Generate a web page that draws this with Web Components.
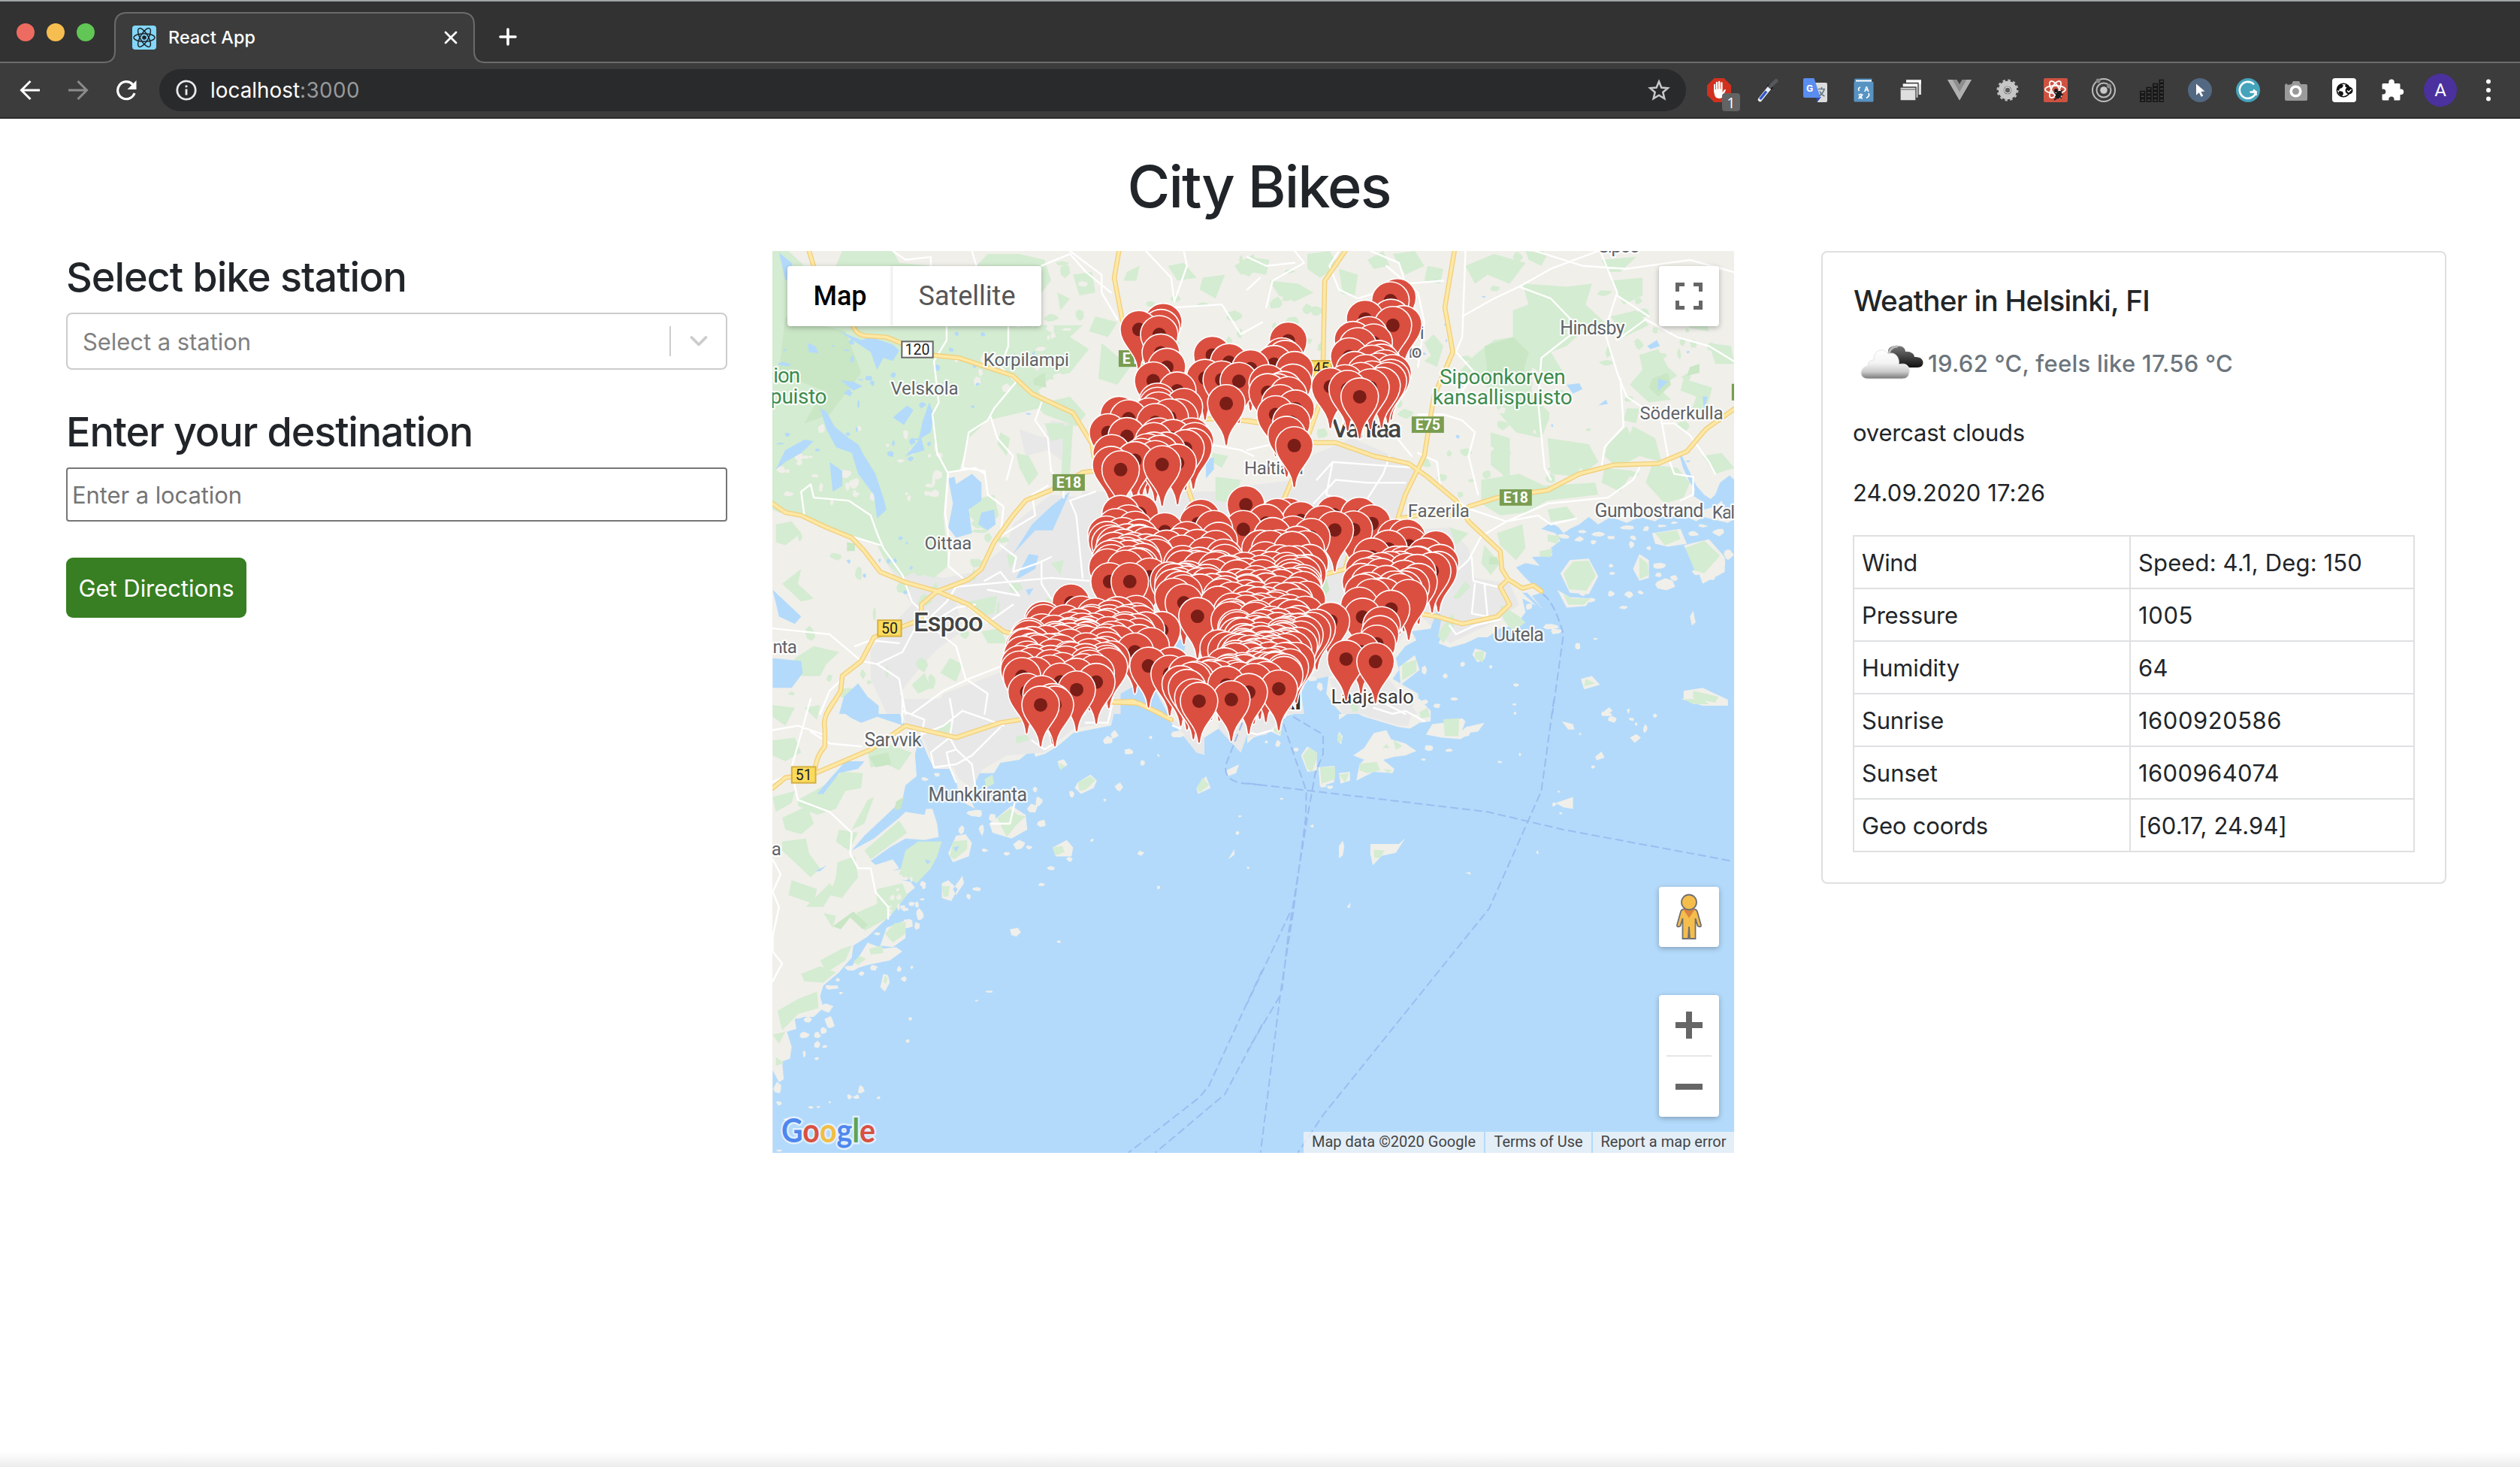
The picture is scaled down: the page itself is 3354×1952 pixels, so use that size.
<!DOCTYPE html>
<html lang="en">
<head>
<meta charset="utf-8">
<title>React App</title>
<style>
html,body{margin:0;padding:0;background:#fff}
body{width:3354px;height:1952px;overflow:hidden;font-family:Inter,"Liberation Sans",sans-serif;color:#212529}
</style>
</head>
<body>
<city-app></city-app>
<script>
const define = (name, html, init) => {
  const t = document.createElement('template');
  t.innerHTML = html;
  customElements.define(name, class extends HTMLElement {
    constructor() {
      super();
      this.attachShadow({mode: 'open'}).appendChild(t.content.cloneNode(true));
      if (init) init.call(this, this.shadowRoot);
    }
  });
};

/* ---------- browser frame ---------- */
define('tab-strip', `
<style>
:host{display:grid;height:84px;background:#323232;color:#fff}
svg.frame{grid-area:1/1;width:3354px;height:84px}
.row{grid-area:1/1;z-index:1;display:flex;align-items:center;height:84px}
.lights{display:flex;gap:16px;padding:2px 0 0 22px;width:132px}
.lights i{width:24px;height:24px;border-radius:50%;box-sizing:border-box}
.tab{display:flex;align-items:center;width:478px;box-sizing:border-box;padding:15px 23px 0 22px}
.tab svg{flex:none}
.t{font-size:23.3px;line-height:32px;font-weight:500;margin-left:16px;flex:1;white-space:nowrap}
.plus{margin-left:32px;padding-top:14px}
</style>
<svg class="frame" viewBox="0 0 3354 84"><path d="M0 1H3354" stroke="#a3a5a6" stroke-width="2"/>
<path d="M0 84V83H138Q153 83 153 68V33Q153 17 169 17H615Q631 17 631 33V68Q631 83 646 83H3354V85H0Z" fill="#3c3c3c" stroke="#6b6b6b" stroke-width="2"/></svg>
<div class="row">
 <div class="lights"><i style="background:#ed6b60"></i><i style="background:#f6be50"></i><i style="background:#61c655"></i></div>
 <div class="tab">
  <svg width="32" height="32" viewBox="0 0 32 32"><rect width="32" height="32" rx="4" fill="#82d7f9"/><g fill="none" stroke="#20252b" stroke-width="1.5"><ellipse cx="16" cy="16" rx="14" ry="5.3"/><ellipse cx="16" cy="16" rx="14" ry="5.3" transform="rotate(60 16 16)"/><ellipse cx="16" cy="16" rx="14" ry="5.3" transform="rotate(120 16 16)"/></g><circle cx="16" cy="16" r="2.8" fill="#20252b"/></svg>
  <div class="t"><fit-text w="116">React App</fit-text></div>
  <svg width="18" height="18" viewBox="0 0 18 18" stroke="#fff" stroke-width="2.8" stroke-linecap="round"><path d="M2 2L16 16M16 2L2 16"/></svg>
 </div>
 <svg class="plus" width="24" height="26" viewBox="0 0 24 26" stroke="#fff" stroke-width="3.6" stroke-linecap="round"><path d="M12 3V23M2 13H22"/></svg>
</div>`);

const EXT = [
 /* blocker */ '<path d="M9.5 0h13L32 9.5v13L22.500 32h-13L0 22.500v-13z" fill="#d1301f"/><path d="M9 17.500V9q0-1.300 1-1.300T11 9v6h.8V6q0-1.300 1.200-1.300T14.200 6v8.500h.8V5q0-1.300 1.200-1.300T17.400 5v9.500h.8V6.500q0-1.300 1.200-1.300t1.200 1.300V19l2-3.200q1.200-1.500 2.500-.4l-3.800 8.300q-1.500 3.300-4.800 3.300-5.500 0-6.500-5z" fill="#fff"/>',
 /* picker */ '<path d="M6.500 28.500L19 13" stroke="#e8edf5" stroke-width="5.500" stroke-linecap="round"/><path d="M6.500 28L15 17.500" stroke="#3058c8" stroke-width="3.500"/><path d="M17 9l6 5" stroke="#15181c" stroke-width="3.500"/><path d="M20 11L28 3.500" stroke="#55595e" stroke-width="5" stroke-linecap="round"/>',
 /* translate */ '<path d="M14 6h16q2 0 2 2v22q0 2-2 2H19z" fill="#dcdcdc"/><path d="M17 25h7l-5.500 7z" fill="#2d49b5"/><path d="M2 0h12.500L23 26H2Q0 26 0 24V2Q0 0 2 0z" fill="#5a8df0"/><path d="M20 14.500h9M24.500 12v2.500M28 14.500q-1 5-7 9.500M22 17.500q2 4.500 6.500 6.500" stroke="#667a86" stroke-width="1.700" fill="none"/><text x="4" y="18" font-size="13.500" font-weight="700" fill="#fff" font-family="Roboto">G</text>',
 /* dictionary */ '<path d="M5 1h22v5H5z" fill="#fff"/><path d="M5.500 1.500h22M5 1v5" stroke="#4a87b8" stroke-width="2"/><rect x="3.500" y="4.500" width="26" height="27" rx="1.500" fill="#5793c2"/><path d="M12 12q-4 2-1.500 5M9.500 22h6M12.500 20.500V22M14.500 22q-1 3.500-5 5M10.500 23.500q1.500 3 4.500 3.500M23 20q2 4-3 6.500" stroke="#fff" stroke-width="1.700" fill="none"/><text x="17" y="18" font-size="9.500" font-weight="700" fill="#fff" font-family="Roboto">A</text>',
 /* windows */ '<path d="M9 2h20v20H9z" fill="#ddd"/><path d="M9 5.500h20" stroke="#fff" stroke-width="4"/><path d="M4 6.500h21v20H4z" fill="#ddd" stroke="#3c3c3c" stroke-width="1.300"/><path d="M5 10h19" stroke="#fff" stroke-width="3.500"/><path d="M1 12h21v18H1z" fill="#dedede" stroke="#3c3c3c" stroke-width="1.300"/><path d="M2 15h19" stroke="#777" stroke-width="1.300"/>',
 /* vue */ '<path d="M0 2h12.500L16 8l3.500-6H32L16 29.500z" fill="#8e8e8e"/><path d="M0 2h6.500L16 18.500 25.500 2H32L16 29.500z" fill="#b0b0b0"/>',
 /* gear */ '<circle cx="16" cy="16" r="12.500" fill="none" stroke="#bcbcbc" stroke-width="4" stroke-dasharray="3.270 3.270"/><circle cx="16" cy="16" r="8.700" fill="none" stroke="#c6c6c6" stroke-width="7"/><circle cx="16" cy="16" r="4" fill="#5c5c5c" stroke="#e2e2e2" stroke-width="1.500"/>',
 /* react debug */ '<rect width="32" height="32" rx="2" fill="#cf5241"/><g fill="none" stroke="#fff" stroke-width="1.800"><ellipse cx="15.500" cy="15" rx="13.500" ry="5"/><ellipse cx="15.500" cy="15" rx="12.500" ry="5" transform="rotate(60 15.500 15)"/><ellipse cx="15.500" cy="15" rx="12.500" ry="5" transform="rotate(120 15.500 15)"/></g><ellipse cx="20" cy="22" rx="3.800" ry="5.500" transform="rotate(25 20 22)" fill="#1b1b1b"/><path d="M14 19l10 8M15 25l3-1M14 29l4-3M23 18l2-2M23 22l3 0" stroke="#1b1b1b" stroke-width="1.600"/><circle cx="16.500" cy="16.500" r="2.500" fill="#1b1b1b"/>',
 /* target */ '<g fill="none" stroke="#bdbdbd" stroke-width="2"><circle cx="16" cy="16" r="15"/><circle cx="16" cy="16" r="9.500"/></g><circle cx="16" cy="16" r="4.800" fill="#c9c9c9"/><circle cx="8.500" cy="3.500" r="3" fill="#888"/><circle cx="23" cy="10.500" r="3" fill="#888"/>',
 /* bars */ (() => { let s = ''; [3, 4, 5, 6].forEach((n, c) => { for (let i = 0; i < n; i++) s += `<rect x="${.8 + c * 8.500}" y="${27.600 - i * 5}" width="5.600" height="3.400" fill="#444" stroke="#141414" stroke-width="1.600"/>`; }); return s; })(),
 /* cursor */ '<circle cx="16" cy="16" r="16" fill="#536882"/><path d="M11 7.500L22.500 17.500l-5.200.5 3 5.500-2.600 1.300-2.800-5.600-3.900 3.400z" fill="#fff"/>',
 /* grammar */ '<circle cx="16" cy="16" r="16" fill="#45a3bb"/><path d="M24 8.500A11 11 0 1 0 26.500 18.500H18.500M26.500 18.500l-3.500-3M26.500 18.500V23" stroke="#fff" stroke-width="2.600" fill="none"/>',
 /* camera */ '<path d="M10 8l2-4h8l2 4h7q2 0 2 2v18q0 2-2 2H3q-2 0-2-2V9l2-2 2 2z" fill="#9a9a9a"/><circle cx="15.500" cy="17.500" r="6.300" fill="#999" stroke="#fff" stroke-width="3.600"/>',
 /* globe */ '<rect width="32" height="32" rx="4" fill="#fff"/><circle cx="15" cy="16" r="8.700" fill="#fff" stroke="#111" stroke-width="1.500"/><path d="M7 11q3-3 6-3l2 2-2 3-3 1-1 3-2-1zM10 17l4 1 1 3-2 3q-4-2-5-5zM18 8q4 1 5 4l-3 1-3-2z" fill="#111"/><circle cx="22.500" cy="16.500" r="5" fill="#111"/><path d="M20 16.500l2 2 3.500-3.500" stroke="#fff" stroke-width="1.500" fill="none"/>',
 /* puzzle */ '<path d="M3 7h8.300V5.200a3.700 3.700 0 0 1 7.400 0V7H25q1.500 0 1.500 1.500V14.500h1a3.700 3.700 0 0 1 0 7.400h-1V28q0 1.500-1.500 1.500H18.500v-1.300a3.600 3.600 0 0 0-7.200 0v1.300H4Q2.500 29.500 2.500 28V21.500h1.300a3.300 3.300 0 0 0 0-7H2.500V8.500Q2.500 7 4 7z" fill="#fff"/>'
];

define('tool-bar', `
<style>
:host{display:flex;align-items:center;height:74px;box-sizing:border-box;background:#3c3c3c;border-bottom:2px solid #2a2a2c;padding-left:8px;color:#fff}
.nav{width:64px;display:flex;justify-content:center}
.omni{display:flex;align-items:center;width:2032px;height:56px;margin-left:12px;border-radius:28px;background:#292a2c;box-sizing:border-box;padding:0 21px 0 22px;font-size:27.800px;line-height:40px}
.url{flex:1;margin-left:18px;white-space:nowrap}
.port{color:#97999b}
.ext{display:flex;margin-left:12px}
.cell{width:64px;height:56px;display:flex;align-items:center;justify-content:center;position:relative}
.badge{position:absolute;left:36px;top:32px;width:24px;height:24px;border-radius:4px;background:#636363;font:500 20px/25px "Open Sans",sans-serif;text-align:center}
.avatar{width:44px;height:44px;border-radius:50%;background:#4b319e;font:24px/45px Roboto,sans-serif;text-align:center}
</style>
<div class="nav"><svg width="28" height="28" viewBox="0 0 28 28" fill="none" stroke="#fff" stroke-width="3"><path d="M27 14H3M14.500 2L2.500 14l12 12"/></svg></div>
<div class="nav"><svg width="28" height="28" viewBox="0 0 28 28" fill="none" stroke="#8c8c8c" stroke-width="3"><path d="M1 14H25M13.500 2l12 12-12 12"/></svg></div>
<div class="nav"><svg width="28" height="28" viewBox="0 0 28 28"><path d="M25 18A11.500 11.500 0 1 1 22.500 6.300" fill="none" stroke="#fff" stroke-width="3.200"/><path d="M27.500 1V13H15.500z" fill="#fff"/></svg></div>
<div class="omni"><svg width="28" height="28" viewBox="0 0 28 28"><circle cx="14" cy="14" r="12.200" fill="none" stroke="#e8eaed" stroke-width="2.800"/><path d="M14 12.500V20.500M14 7.500V10.300" stroke="#e8eaed" stroke-width="2.800"/></svg>
<div class="url"><fit-text w="119">localhost</fit-text><span class="port"><fit-text w="80">:3000</fit-text></span></div>
<svg width="30" height="30" viewBox="0 0 30 30"><path d="M15 3.500l3.300 8 8.500.7-6.500 5.600 2 8.400-7.300-4.500-7.300 4.500 2-8.400-6.500-5.600 8.500-.7z" fill="none" stroke="#c7c9cb" stroke-width="2.500"/></svg></div>
<div class="ext"></div>`, root => {
  const e = root.querySelector('.ext');
  e.innerHTML = EXT.map((s, i) => `<div class="cell"><svg width="32" height="32" viewBox="0 0 32 32">${s}</svg>${i ? '' : '<div class="badge">1</div>'}</div>`).join('')
   + '<div class="cell"><div class="avatar">A</div></div><div class="cell"><svg width="6" height="30" viewBox="0 0 6 30" fill="#fff"><circle cx="3" cy="3.500" r="3"/><circle cx="3" cy="15" r="3"/><circle cx="3" cy="26.500" r="3"/></svg></div>';
});

/* ---------- form column ---------- */
define('station-form', `
<style>
:host{display:flex;flex-direction:column;width:880px;align-items:flex-start;white-space:nowrap}
h3{margin:0 0 14px;font-size:54px;line-height:70px;height:68px;font-weight:500}
.select,.input{display:flex;align-items:center;width:880px;box-sizing:border-box;font-size:31px}
.select{height:76px;border:2px solid #ccc;border-radius:8px;padding:0 24px 0 20px;color:#808080;margin-bottom:48px}
.select span{flex:1}
.sep{width:2px;height:40px;background:#ccc;margin-right:25px}
.input{height:72px;border:2px solid #767676;border-radius:4px;padding-left:6px;color:#757575;margin-bottom:48px}
.btn{display:flex;align-items:center;justify-content:center;width:240px;height:80px;border-radius:9px;background:#377f22;color:#fff;font-size:31px}
</style>
<h3><fit-text w="453">Select bike station</fit-text></h3>
<div class="select"><span><fit-text w="224">Select a station</fit-text></span><div class="sep"></div><svg width="24" height="16" viewBox="0 0 24 16" fill="none" stroke="#ccc" stroke-width="3.800" stroke-linecap="round" stroke-linejoin="round"><path d="M2.500 3l9.500 9.500L21.500 3"/></svg></div>
<h3><fit-text w="541">Enter your destination</fit-text></h3>
<div class="input"><fit-text w="226">Enter a location</fit-text></div>
<div class="btn"><fit-text w="207">Get Directions</fit-text></div>`);

/* ---------- weather card ---------- */
define('weather-row', `
<style>
:host{display:flex;height:68px;font-size:31px;line-height:69px}
:host(:not(:last-child)){border-bottom:2px solid #dee0e1}
div{padding-left:10px;white-space:nowrap}
.k{width:356px;border-right:2px solid #dee0e1}
</style><div class="k"><slot name="k"></slot></div><div><slot></slot></div>`);

define('weather-card', `
<style>
:host{display:block;box-sizing:border-box;width:832px;height:842px;border:2px solid #dfdfdf;border-radius:8px;padding:40px;white-space:nowrap}
h5{margin:0 0 9px 1px;font-size:38.700px;line-height:48px;font-weight:500}
.now{display:flex;align-items:center;height:100px;font-size:31px;font-weight:500;color:#6c757d;margin-bottom:19px}
p{margin:0 0 32px;font-size:31px;line-height:48px}
.table{border:2px solid #dee0e1}
</style>
<h5><fit-text w="394">Weather in Helsinki, FI</fit-text></h5>
<div class="now"><svg width="100" height="100" viewBox="0 0 100 100"><defs><linearGradient id="a" x1="0" y1="0" x2="0" y2="1"><stop offset="0" stop-color="#fff"/><stop offset=".45" stop-color="#f4f4f4"/><stop offset=".75" stop-color="#ccc"/><stop offset="1" stop-color="#777"/></linearGradient><linearGradient id="b" x1="0" y1="0" x2="0" y2="1"><stop offset="0" stop-color="#777"/><stop offset=".5" stop-color="#444"/><stop offset="1" stop-color="#111"/></linearGradient></defs>
<path d="M48 40C44 30 52 26 59 28C66 26 70 31 70 35C77 34 82 38 82 42C91 41 95 47 93 52Q92 56 85 56H60C56 48 50 44 48 40Z" fill="url(#b)"/><path d="M46 42Q50 27 60 28" stroke="#bbb" stroke-width="3" fill="none"/>
<path d="M20 71C8 71 8 56 20 54C20 48 24 46 28 46C27 32 42 29 47 38C55 34 63 42 61 52C70 49 77 54 75 63Q74 71 66 71Z" fill="url(#a)" stroke="#e5e5e5" stroke-width="1"/></svg><fit-text w="406">19.62 °C, feels like 17.56 °C</fit-text></div>
<p><fit-text w="229">overcast clouds</fit-text></p>
<p><fit-text w="256">24.09.2020 17:26</fit-text></p>
<div class="table">
<weather-row><fit-text slot="k" w="74">Wind</fit-text><fit-text w="298">Speed: 4.1, Deg: 150</fit-text></weather-row>
<weather-row><fit-text slot="k" w="128">Pressure</fit-text><fit-text w="73">1005</fit-text></weather-row>
<weather-row><fit-text slot="k" w="130">Humidity</fit-text><fit-text w="40">64</fit-text></weather-row>
<weather-row><fit-text slot="k" w="109">Sunrise</fit-text><fit-text w="191">1600920586</fit-text></weather-row>
<weather-row><fit-text slot="k" w="101">Sunset</fit-text><fit-text w="188">1600964074</fit-text></weather-row>
<weather-row><fit-text slot="k" w="168">Geo coords</fit-text><fit-text w="198">[60.17, 24.94]</fit-text></weather-row>
</div>`);

/* ---------- map ---------- */
/* Each tile has its own drawing grid: [scaleX, scaleY, originX, originY]. */
const SX = .42092, SY = .39541;
const TILE = {A: [SX, SY, -8, -4], B: [SX, SY, 632, -4], C: [SX, SY, -8, 596], D: [SX, SY, 632, 596], E: [SX, SX, 272, 26]};
let seed = 7;
const rnd = () => (seed = (seed * 16807) % 2147483647) / 2147483647;
const blob = (x, y, rx, ry) => {
  const n = 7, p = [];
  for (let i = 0; i < n; i++) { const a = i / n * 6.283 + rnd() * .6, k = .7 + rnd() * .5; p.push((x + Math.cos(a) * rx * k).toFixed(0) + ' ' + (y + Math.sin(a) * ry * k).toFixed(0)); }
  return 'M' + p.join('L') + 'Z';
};
const blobs = l => l.map(b => blob(...b)).join('');
const scatter = (n, x0, y0, x1, y1, r0, r1) => { let s = ''; for (let i = 0; i < n; i++) s += blob(x0 + rnd() * (x1 - x0), y0 + rnd() * (y1 - y0), r0 + rnd() * (r1 - r0), r0 + rnd() * (r1 - r0)); return s; };

const LAND = {
 A: 'M0 0H1568V1568H0Z',
 B: 'M0 0H1568V762L1540 780L1525 765L1495 790L1480 830L1465 845L1445 830L1420 800L1395 745L1375 700L1365 690L1378 740L1400 790L1415 810L1412 835L1435 850L1445 880L1480 870L1500 850L1510 880L1540 870L1568 905V915L1540 912L1520 925L1480 915L1440 905L1420 920L1380 900L1310 905L1290 920L1240 905L1200 925L1150 905L1110 930L1080 905L1050 930L1020 945L1000 960L985 940L960 925L930 945L975 960L990 985L960 1010L965 1035L900 1040L925 1070L880 1060L850 1075L880 1110L930 1160L900 1170L935 1215L870 1180L880 1225L850 1270L800 1280L760 1310L730 1310L690 1330L640 1345L605 1330L625 1280L650 1230L690 1190L640 1215L590 1280L520 1290L535 1320L500 1340L470 1380L480 1420L460 1450L540 1500L545 1568H290L250 1500L260 1420L200 1430L170 1500L180 1568H0Z',
 C: 'M0 0H245L235 40L270 65L300 80L350 60L420 85L460 100L480 150L470 185L475 260L440 290L430 340L370 400L310 460L270 510L340 470L420 400L440 380L500 390L505 370H525L540 420L545 465L500 475L440 470L390 500L330 545L370 580L420 575L440 560L430 610L455 615L470 635L410 690L380 740L320 800L275 830L270 870L230 920L180 965L170 1000L180 1040L150 1070L120 1070L90 1080L95 1110L65 1120L80 1170L75 1210L50 1220L55 1280L40 1290L20 1250V1568H0Z'
  + 'M415 0H1110L1090 90L1040 100L970 115L920 160L880 185L850 195L845 165L800 205L740 215L720 250L670 250L655 305L640 330L660 370L610 340L600 270L580 235L530 235L510 190L490 140L440 90L425 60Z M1260 60L1310 110L1360 180L1385 188V130L1430 100L1500 180L1520 120L1568 115V0H1190L1280 40Z',
 D: 'M0 0H175L150 50L115 60L105 125L75 110L20 130L0 150Z M290 0H545L580 40V75L545 80L515 100L480 95L370 60L330 40L290 70Z'
};
const ISLES = {
 B: 'M1280 960l90-15 20 50-60 10-40-10z M1380 1000l80-20 50 60 0 50-70 40-20-60z M990 1095l30-45 60-5 30 60-30 60-60-5z M1240 1030l30 20 0 60-30 10-20-40z M980 1150l40 25 70 5-20 25-60 5z M1380 1490l60-10 80 40 0 20-80 0-60-20z M1400 1240l10-20 8 40-12 10z M1055 1450l35-10 25 30-50 15z M480 1410l50-40 15 50-60 50z',
 C: 'M585 540l-10-20 25-60 30-5 20 30-10 45-50 20z M340 560l60-20 20 30-60 20z M705 420l70-60 45 30 5 50-50 30-60-20z M985 280l40-25 20 20-10 25-40 20-20-20z M1360 300l30-40 15 40-40 20z M905 500l45-25 20 25-5 30-50 0z M555 620l0 50 30 10 20-40-30-30z M590 640l30-45 5 25-25 40z M360 830l20-60 60-25 0 60-40 30z M320 820l50 20 40-5 20 15-40 30-70 15-60 20 40-60z M360 970l10-45 15 5 5 25-15 30z M770 775l25-5 10 15-15 15-15-5z M1455 240l40-20-10 30-25 10z M1460 540l20-35 0 20z M1180 510l15 8-10 10-12-6z',
 D: 'M335 190L370 165L400 115L440 105L455 135L500 150L535 175L500 190L465 195L430 205L465 235L460 250L400 245L345 275L355 220L370 205Z M565 120l20-35 35-5 60-15 10 10-10 30 25 10-30 20-60-5z M690 95l60-15-20 30-40 5z M225 230l50-5 0 55-45 15z M290 250l35-5 0 30-30 10z M285 140l5-30 12 15-5 28z M170 190l20-30 30 20 0 60-30 5z M390 488l90 0 20-20-30 50-45 10-28 32-8-40z M290 495l12-18 5 20-5 30-12 10z M975 350l55-20 0 40-30-5z M1100 195l20-18 10 20-25 10z M995 75l35 10 5 18-20 0z M1210 130l20-12 15 12-20 18z M1130 40l15-12 10 12-20 15z M1370 0l90-10 15 25-40 0z M315 700l12-15-3 20z M690 585l15-3 2 10z'
};
const SMALL = {
 B: [[1000,970,20,8],[1050,980,18,9],[1110,965,22,9],[1095,990,10,9],[1150,975,12,7],[1200,940,22,8],[1260,945,10,10],[1410,960,18,9],[1490,955,20,14],[1520,1030,16,20],[1220,975,10,10],[1215,1000,10,12],[1150,1070,8,6],[1155,1095,10,5],[1300,1070,25,10],[1350,1110,15,12],[1320,1130,30,20],[1300,1100,12,10],[1420,1090,15,10],[1150,1165,12,12],[1205,1165,14,12],[1245,1160,10,8],[1190,1210,14,6],[1090,1185,12,8],[1060,1165,10,6],[1020,1100,10,8],[890,1205,12,12],[960,1275,22,12],[975,1290,20,9],[1045,1340,8,12],[1100,1315,8,4],[735,1370,24,22],[770,1410,6,6],[850,1470,10,6],[600,1540,12,8],[625,1440,8,8],[560,1420,10,18],[680,1400,8,8],[1135,1568,18,8],[1470,1110,12,8],[200,1450,22,12],[230,1480,10,16],[1060,955,16,6],[1310,935,14,5],[1440,935,16,5],[1350,925,12,5],[1500,1060,14,16],[1270,1010,9,8]],
 C: [[500,270,12,6],[540,255,10,8],[660,385,24,14],[615,440,10,14],[680,440,8,20],[690,510,10,7],[715,400,12,16],[840,370,18,16],[870,420,14,14],[800,490,18,20],[760,520,10,7],[830,500,10,8],[900,570,14,8],[958,540,9,10],[870,625,10,5],[1030,475,6,6],[935,220,16,16],[1080,140,18,14],[1100,120,12,14],[1145,178,14,10],[1190,215,8,10],[1115,295,12,14],[965,320,8,12],[860,345,12,14],[850,305,8,10],[1240,190,5,5],[1215,130,6,6],[1070,340,4,5],[665,640,12,8],[640,665,8,10],[450,755,18,20],[485,725,12,18],[475,765,10,14],[430,700,10,6],[460,690,10,8],[350,790,10,6],[435,943,10,8],[420,908,8,10],[460,903,5,5],[205,970,22,8],[225,945,8,6],[190,1040,20,16],[200,1090,16,22],[120,1130,16,12],[160,1130,12,10],[180,1115,12,12],[160,1165,12,14],[185,1170,10,6],[120,1195,6,10],[160,1210,8,6],[235,990,7,5],[455,1077,6,7],[447,1152,6,7],[925,817,6,5],[705,985,12,4],[665,1015,6,3],[300,1315,10,15],[285,1340,12,8],[262,1340,8,10],[355,1342,6,6],[35,1310,14,20],[40,1360,10,8],[140,1375,8,5],[165,1373,6,4],[200,1357,4,4],[65,1415,12,4],[40,1520,10,4],[1240,634,5,6],[1497,395,6,4],[1490,452,6,7],[1523,568,4,4],[1300,120,20,12],[300,925,10,8],[270,905,20,8],[130,1080,15,10],[340,905,12,10]],
 D: [[108,336,6,3],[205,428,6,5],[5,568,3,3],[97,150,9,12],[155,170,10,8],[60,145,5,5],[240,293,12,6],[262,297,10,6],[577,165,15,12],[558,204,8,4],[637,173,12,6],[798,212,9,4],[862,187,4,6],[918,517,4,6],[1155,68,16,12],[1215,68,8,6],[1205,40,5,8],[1230,85,5,6],[1258,100,6,14],[1290,57,8,8],[1093,229,8,6],[985,312,5,4],[990,384,6,4],[1052,118,4,4],[845,18,8,5],[847,48,5,5],[655,0,12,6],[970,355,8,8],[560,10,14,10],[690,115,20,14]]
};
const GREEN = {
 A: 'M0 0H60L120 60H220L240 10H400L420 50L520 60L560 90L600 130L700 20H800L880 40L900 110L870 150V260H1000L960 300L1020 340L960 420L920 430L860 480L880 520L960 500L1010 560L980 600L880 560L860 540L700 580L640 640L610 750L570 760L560 900L575 1070L530 1110L470 1090L430 1110L380 1060L350 1000L300 980L250 960L170 940L110 900L40 890L0 870Z M30 930L80 920L110 960L60 1000L30 990Z M50 1130L110 1080L100 1130L150 1180L110 1190Z M90 1380L150 1340L230 1360L190 1400L170 1440L100 1440Z M740 620L770 640L760 700L730 660Z M790 690L830 700L860 760L830 800L800 740Z M880 590L940 590V640L900 650Z M940 600L970 590L960 760L930 830Z M650 850L720 830L735 900L690 950L640 900Z M640 1190L730 1170L720 1230L670 1240Z M460 1470L500 1430L520 1480L480 1500Z M680 1290L740 1280L760 1330L700 1330Z M970 90L1030 80L1040 150L990 160Z M920 150L960 170L930 210Z M1040 230L1110 250L1080 300L1020 280Z M1060 320L1150 400L1110 460L1050 440Z M1140 80L1180 60L1170 110L1130 110Z M1380 100L1450 90L1420 170L1370 140Z M1270 60L1320 50L1360 100L1300 110Z M1480 60L1540 20L1560 80L1500 90Z M580 1380L620 1400L600 1460L550 1430Z M1410 690L1460 700L1440 740L1410 720Z M760 1030L790 1040L770 1080Z M900 1060L940 1050L930 1100Z M1420 770L1500 780L1480 860L1420 850Z',
 B: 'M0 30L70 40L60 90L10 80Z M190 20L260 10L290 60L230 100L190 70Z M70 110L160 120L210 150L150 180L100 160Z M290 70L350 90L340 160L300 140Z M380 40L430 10L450 60L400 70Z M570 60L620 70L610 120L560 110Z M460 20L530 10L560 60L500 90Z M690 60L780 20L880 50L830 120L760 90L720 120Z M880 10L950 20L930 60L890 40Z M870 120L1010 130L1090 120L1070 190L1140 260L1050 290L1010 330L960 350L1000 420L940 430L900 400L900 490L960 560L930 640L850 620L800 560L760 470L700 420L650 440L720 360L780 310L840 300L840 210L890 190Z M1120 40L1230 30L1180 80L1140 80Z M1150 110L1250 100L1250 160L1190 190Z M1150 230L1230 210L1270 260L1190 300Z M1380 210L1450 230L1460 280L1400 270Z M1460 320L1530 330L1540 390L1480 390Z M1240 360L1300 340L1330 400L1360 430L1300 470L1340 510L1270 520L1210 460L1250 410Z M1380 440L1470 470L1450 550L1400 560L1420 500L1370 480Z M1200 540L1240 540L1230 590L1190 580Z M1220 600L1290 640L1310 720L1240 700L1200 650Z M950 640L1080 660L1110 720L1050 770L960 760Z M770 620L830 640L830 780L770 730Z M1140 660L1200 600L1240 700L1170 740L1130 700Z M740 780L860 760L940 800L1100 790L1110 830L950 850L880 890L800 900L740 860Z M1130 740L1220 750L1180 820L1120 790Z M1280 730L1360 740L1400 790L1380 840L1320 860L1260 790Z M1440 700L1500 690L1540 740L1480 760Z M950 880L1010 870L1040 910L960 920Z M790 960L870 930L880 1010L850 1050L800 1000Z M750 1000L800 1060L770 1100L740 1060Z M640 940L700 960L660 1000Z M950 965l40 5-10 25-30-8z M925 1020l40-8-5 28-35-2z M1290 960l70-10 10 30-50 20z M1385 1010l60-25 50 50-50 60-30-10z M1000 1095l30-40 50-2 22 50-30 50-55-5z M1240 1040l25 20 5 40-30 15z M1000 1165l30 15 55 0-20 20-50 0z M1410 1490l80 20-10 20-70-15z M1070 1450l30 15-35 10z M200 1140L240 1110L260 1150L230 1210Z M650 1180L690 1120L705 1140L670 1180Z M600 1300L650 1230L660 1260L620 1330Z M800 1200L860 1240L880 1260L840 1290L810 1250Z M720 1360l30-5-5 40-25-15z M490 1400l45-15 0 40-45 30z M560 320L590 290L620 330L590 380Z M480 260L530 240L540 300Z M620 330L600 400L560 380Z M320 560L380 540L420 570L350 620Z',
 C: 'M20 20L90 30L60 90L20 60Z M20 140L90 130L110 180L60 210L20 190Z M120 30L170 20L160 70Z M320 180L380 150L460 180L420 240L380 220L330 230Z M100 340L200 280L240 245L305 250L300 300L250 310L220 370L160 390L100 360Z M20 330L90 310L80 350L30 380Z M50 400L130 360L150 420L110 455L60 440Z M230 440L290 450L260 510L220 480Z M310 510L420 410L445 450L380 500L330 540Z M270 440L320 340L340 330L310 420Z M50 480L125 470L135 520L170 570L140 600L90 550L50 510Z M80 610L160 640L150 690L70 660Z M225 550L280 530L290 600L260 640L240 670L200 660L220 600Z M125 700L200 620L215 640L180 700Z M350 640L430 620L445 660L400 720L380 740L310 780L285 720L350 690Z M420 590L440 510L480 480L555 480L540 530L520 570L475 620Z M180 720L220 730L210 770Z M170 880L240 840L270 830L250 880L190 920Z M110 925L170 900L220 920L180 955L120 950Z M35 1050L100 1010L160 985L165 1040L100 1060L50 1115Z M20 1130L60 1120L40 1160Z M30 1205L55 1225L30 1235Z M590 480l45-5 0 30-40 35-15-10z M730 400l40-30 25 20 25 5-30 30-30 40z M540 100L580 70L590 110L560 120Z M790 125l35-5 5 20-40 10z M690 270l25-15 5 30-25 15z M985 280l40-20 15 15-30 30-20 5z M1360 300l20-35 20 25-30 25z M905 500l30-5 8 20-30 12z M555 630l25 0-5 35-15 0z M375 790l30-35 35-5 0 40-40 30z M325 840l40-10 5 25-40 5z M275 885l20-20 20 10-25 20z M370 950l5-20 8 10-5 20z M925 215l20 10-15 15z',
 D: 'M620 68L670 65L668 125H625Z M355 218L410 212L420 240L380 250L355 240Z M462 138L490 158L470 172Z M428 165L440 152L450 165Z M432 235L458 240L445 250Z M230 230L278 228L278 270L235 285Z M290 255l32-5-12 32z M285 120l12 0 2 25-12 0z M175 190l20-25 25 15 0 20-15 45-15-10z M400 508L435 510L420 535L402 535Z M545 45l25-15 8 30-30 5z M1380 0h60l20 18-50 0z M325 20l25-10 0 30-15 5z M80 105l30-20-5 35z'
};
const DARK = {A: 'M60 230L250 280L300 420L200 560L120 590L180 480L40 420Z M845 440L880 420L885 470L845 460Z M255 990l25 5 0 25-25 0z', B: 'M1280 440L1330 420L1340 460L1300 500L1270 470Z M1400 400l30-10 0 30-40 10z M750 330L840 300L890 350L870 430L760 420Z M765 1040l25 0 5 25-30 0z M200 1160L250 1110L260 1150L210 1200Z', C: 'M210 765L275 715L320 760L305 775L265 735L235 775Z M410 345L435 330L425 370L405 375Z M325 195l60-15 10 40-50 10z'};
const URBAN = {
 A: 'M380 1060L560 1110L660 1090L760 1000L780 930L850 870L900 830L1020 840L1060 1200L940 1300L800 1300L700 1260L600 1190L620 1290L540 1350L480 1420L420 1500L480 1568H380L330 1450L330 1350L380 1290L460 1200Z M890 680L940 720L960 590L900 580L880 640L800 610L820 700Z M560 1500L760 1420L800 1568H520Z M1000 820H1568V1568H740L800 1300Z',
 B: 'M200 700L330 640L440 690L540 740L500 860L480 950L640 940L700 1010L720 1110L830 1130L860 1200L780 1260L640 1330L540 1230L500 1290L440 1400L0 1500V800L160 780Z M0 1500L170 1500L180 1568H0Z M260 1450L440 1440L540 1568H300Z',
 C: 'M415 0H1110L1090 80L970 100L880 180L760 190L680 240L650 300L610 270L590 230L530 230L500 140L440 80Z M1270 60L1385 130V188L1360 180Z M1430 100L1500 180L1520 120L1568 115V0H1430Z',
 D: 'M0 0H150L110 60L60 120L0 130Z M350 0H530L510 90L480 90L370 55Z'
};
const LAKE = {
 A: 'M575 775L595 770L600 795L650 760L680 790L680 850L640 880L650 960L600 975L575 940L590 860Z M680 890L720 880L725 930L700 950L670 930Z M840 930L900 870L960 820L905 950L850 950L780 1030Z M790 1110L830 1030L860 1035L850 1080L800 1110Z M820 1150l25-5 -15 25z M200 720l40 30 0 50-30 20z M170 540L190 550L215 600L260 640L290 660L310 700L345 760L370 840L380 880L350 910L340 830L290 760L270 690L220 670L190 610Z M515 520L530 560L520 620L490 640L500 680L440 700L480 650L495 580Z M40 15L80 50L90 90L60 110L50 60Z M230 280L300 310L330 300L400 325L420 345L400 380L370 370L350 410L330 350Z M20 1150L60 1190L110 1240L90 1265L40 1240Z M20 1380L110 1390L115 1430L80 1480L20 1480Z M230 1568L245 1510L290 1465L320 1510L355 1540V1568Z M1390 710l25-5 0 40-25 30z M1120 1500L1170 1470L1230 1490L1270 1568H1120Z M1280 1330l50-20-10 50z M60 680l60-35 30 5-40 40-50 30-30 25z M130 320l25 10 10 25-30-5z M235 445l40 5 30 15-30 15z M400 570l45-40 20 15-30 50z',
 B: 'M1265 330l30-20 10 20-30 10z M1300 440l30 10-30 30z M1010 460l40-5 10 20-30 15z M1110 530l25-20 5 15z M1440 500l15 0-10 50z M580 1280l20-60 15 20-10 60-30 40z M870 1160l15 0 50 55-15-5z M900 1110l45 40-20 5z M180 1440L240 1500L300 1568H180Z',
 C: 'M160 320L200 270L250 210L310 210L290 235L230 250L180 320Z M155 580l35-20-20 20z M500 540l20 5-10 12z M590 500l20-5-10 20z M90 1075l30 5-20 20z'
};
const ROADW = {
 A: ['M400 10L440 40L520 30V70','M650 10L670 80','M570 260V310L530 380L545 520L525 560L540 690L575 760L565 890L580 1000L575 1070L620 1110','M765 260V330L740 400L790 450L720 540L700 580L640 620L620 740L690 750L700 830L750 870L740 970','M870 520L850 580L890 640L900 750L940 800V840','M710 570L730 640L780 700L760 780','M575 755L660 740L690 760','M120 900L110 820L140 795L150 840L260 850L330 900L350 960L370 1010L430 1100L460 1190L500 1230','M600 1140L900 1110L1020 1120','M740 970L850 900L840 830L890 800','M740 1000L790 1040L780 1090L860 1060L900 1040','M1000 1110L980 900L960 850L1040 820','M870 1060V1130L900 1180','M700 1150L800 1170L740 1090L690 1120','M520 1240L570 1190L600 1140','M490 1230L540 1290L600 1340L630 1450L700 1500L690 1568','M20 1280L200 1300L300 1390L350 1400L430 1360L490 1240','M300 1390L200 1490L170 1568','M350 1400L420 1450L440 1568','M460 1568L560 1490L640 1450L760 1400','M640 1210L700 1260L780 1200','M270 970L360 1000','M870 60L960 20L1010 80L1090 150','M960 10L1060 90L1060 150L1110 240','M1200 10L1280 100L1290 180L1330 60L1320 10','M1290 200L1440 190L1500 290L1568 250','M1400 660L1500 680L1540 700','M540 1250L600 1210L660 1200','M280 1340L330 1320L420 1330'],
 B: ['M150 10L180 50L80 110L60 200','M150 50L60 60L0 30','M290 10L260 60L290 140L350 170L500 120L620 110','M390 10L480 50L500 120L420 200','M690 10L680 300L660 350L720 420L680 480','M680 230L780 170L860 130L960 170L1050 270L930 370L920 520','M860 130L960 70L1110 10','M910 10L1060 60L1200 70L1400 40L1568 90','M1120 20L1170 150L1130 280L1170 420L1200 500L1310 580L1330 700L1350 760L1410 770V830L1370 850','M1170 310L1260 240L1360 300L1460 330L1568 400','M1170 160L1270 230','M1310 590L1350 590L1400 630L1460 720L1480 760','M1180 440L1190 600L1130 670L1120 740','M920 520L940 740L960 780','M680 870L820 920L950 860L1140 840L1220 780L1240 740','M700 880L610 800L600 720L540 690','M540 560L620 560L680 580L720 620L700 700L730 830','M820 920L740 970L700 1050L660 1090','M220 780L270 720L400 730L540 740','M210 860L280 780L380 790L500 790','M270 720L250 830L330 860','M820 920L920 900L960 930L1040 910','M710 1040L715 1120L790 1140','M720 1130L710 1230L760 1240L750 1130','M640 1270L660 1300L720 1270L800 1250','M370 860L430 760L450 700','M420 570L520 700','M0 680L80 660','M440 60L540 150L560 250L540 400','M0 140L40 100','M430 1530L500 1568'],
 C: ['M140 110L200 150L300 160','M140 0L80 230','M20 105L100 90L180 120','M85 270L100 340L200 380L270 450L265 520L290 570L330 570L345 650L385 700V740','M60 260L20 280','M20 540L45 590L20 650L40 700L20 800V850L50 890L20 950','M430 40L500 70L490 120L560 90L620 40L700 70L750 90','M430 0L430 80','M580 0L590 60L580 130L520 180L530 230L600 220L650 190L740 95','M580 130L600 170L650 220L660 290','M600 170L570 180L580 230L600 280','M710 420L770 420L785 350','M840 140L880 170L910 150','M1010 80L1080 80L1095 10','M1285 90L1310 100'],
 D: ['M400 30L460 50L500 40L560 75','M0 110L30 120L80 105']
};
const ROADY = {
 A: ['M135 10L155 80','M270 250Q280 290 310 295L380 300L520 360L610 370L780 430L840 490L970 555L1030 660L1035 700','M20 860L60 890L110 900L190 940L270 975L310 1020L360 1090L440 1125L540 1155L640 1200L700 1250L750 1290L820 1310','M540 1155L640 1115L680 1080L720 990L780 900L820 850L900 815L1000 755L1040 750','M540 1155L490 1200V1250L340 1310L300 1390L240 1440L235 1490L190 1568','M1115 10L1100 100L1125 240L1160 330','M1390 575L1500 580L1568 590','M1340 720L1330 800L1350 860','M1040 1530L1160 1525L1250 1568'],
 B: ['M310 10L245 110L240 380L230 520L150 760L110 860','M655 10L625 200L650 350L590 500L560 700L500 830L470 930','M0 580L100 600L210 655L280 655L400 700L510 725L570 770L660 850L700 920L800 1020L805 1080L825 1115L870 1145L905 1135L930 1155','M825 1115L800 1140L830 1200L790 1240L680 1265L600 1240L540 1230L500 1210','M700 870L790 840L950 815L1050 760L1160 730L1300 725L1390 685L1450 610L1568 520','M180 1140L240 1100L310 1080L330 1000','M480 910L540 900L640 900'],
 C: ['M220 0Q175 60 185 100V160Q160 190 155 230L155 250L60 265L20 300','M155 250L330 170L440 90L600 130L740 80L800 70','M1080 10L1180 15L1280 70']
};
const FERRY = {
 B: ['M935 1165Q970 1190 1000 1300L965 1568'],
 C: ['M1505 80L1455 215Q1440 270 1500 283L1568 290','M1568 912L1400 1300L1370 1340L1145 1527','M1568 1095L1450 1330L1230 1527'],
 D: ['M0 284L760 380L1000 440L1535 546','M970 0L930 310L765 705L240 1400L160 1527','M115 85L145 180L187 310L185 400L145 720L105 990L42 1527','M145 60L240 120V185L215 250L190 400L130 790L110 980','M135 720L0 1025','M103 1000L0 1185']
};
const LABELS = [
 ['A',686,398,271,24,400,'#5f6368','Korpilampi'],['A',393,492,214,24,400,'#5f6368','Velskola'],['A',500,1013,149,24,400,'#5f6368','Oittaa'],['A',465,1290,221,35,500,'#444','Espoo'],
 ['A',20,1363,77,24,400,'#5f6368','nta'],['A',22,453,85,28,400,'#3d8b4d','ion'],['A',12,524,179,28,400,'#3d8b4d','puisto'],
 ['B',989,290,205,25,400,'#5f6368','Hindsby'],['B',608,457,399,28,400,'#3d8b4d','Sipoonkorven'],['B',586,527,442,28,400,'#3d8b4d','kansallispuisto'],['B',1241,577,264,24,400,'#5f6368','Söderkulla'],
 ['B',508,906,195,24,400,'#5f6368','Fazerila'],['B',1099,906,344,25,400,'#5f6368','Gumbostrand'],['B',1470,911,72,24,400,'#5f6368','Kal'],['B',779,1323,159,25,400,'#5f6368','Uutela'],
 ['B',268,636,220,34,500,'#444','Vantaa'],['B',265,1532,262,26,400,'#3b3b3b','Laajasalo'],['B',1110,14,132,24,400,'#5f6368','Sipoo'],['B',510,368,42,24,400,'#5f6368','no'],['B',546,306,12,24,400,'#5f6368','i'],
 ['C',310,160,180,25,400,'#5f6368','Sarvvik'],['C',512,344,313,25,400,'#5f6368','Munkkiranta'],['C',16,527,22,24,400,'#5f6368','a'],
 ['E',846,643,187,24,400,'#5f6368','Haltiala'],['E',700,1388,328,40,500,'#333','Helsinki']
];
const SHIELDS = [['A',426,312,529,371,'w','120'],['A',905,761,1007,817,'g','E18'],['A',1114,344,1216,400,'g','E12'],['A',350,1250,429,1309,'y','50'],['B',520,567,622,622,'g','E75'],['B',798,812,900,867,'g','E18'],['B',200,377,268,434,'y','45'],['C',78,226,158,285,'y','51'],['B',1532,457,1634,513,'g','']];

const PINS = [[590,163],[583,182],[513,186],[577,202],[582,260],[601,305],[558,348],[634,380],[572,415],[572,428],[745,267],[798,290],[866,310],[722,340],[775,345],[829,350],[789,420],[985,222],[965,272],[940,296],[975,280],[1005,315],[920,357],[1000,355],[970,378],[950,385],[985,395],[920,385],[960,420],[1008,437],[945,455],[995,480],[980,520],[1004,553],
[1330,85],[1308,95],[1228,153],[1310,150],[1348,170],[1316,173],[1190,220],[1240,205],[1255,228],[1205,240],[1178,272],[1270,280],[1250,295],[1280,292],[1315,325],[1195,315],[1290,310],[1270,320],[1310,340],[1230,325],[1300,350],[1215,350],[1165,357],[1250,345],[1280,365],[1118,367],[1173,375],[1245,370],[1211,399],
[450,457],[480,468],[655,432],[575,443],[640,465],[545,462],[565,480],[415,512],[475,524],[610,465],[680,525],[690,540],[575,525],[560,540],[620,530],[427,578],[425,615],[685,558],[660,562],[600,570],[540,575],[520,590],[500,600],[560,570],[580,580],[635,608],[565,597],[455,629],[586,613],
[455,770],[515,768],[851,740],[843,818],[710,782],[700,800],[750,818],[595,825],[665,853],[765,855],[410,835],[440,812],[480,800],[500,820],[540,870],[600,880],
[1130,772],[1210,776],[1250,800],[1132,820],[1192,819],[1092,803],[1025,790],[985,778],[950,780],[915,798],[935,840],[1000,835],[1058,843],
[1325,845],[1360,845],[1302,880],[1250,905],[1367,870],[1452,882],[1465,925],[1420,905],[1395,930],[1460,947],[1345,930],[1225,945],[1440,950],[1215,985],[1397,985],[1310,1070],[1220,1095],[1210,1060],[1280,1122],[1275,1150],[1265,1180],[1215,1205],[1168,1228],[1261,1236],
[1120,1108],[1075,1130],[1060,1140],[1036,1152],[698,1093],[655,1050],[650,985],[1010,1235],[990,1255],[955,1322],[860,1333],[805,1356],[703,1361],[790,1310],[615,1250],[610,1275],[543,1250],[645,1308],[665,1320],[685,1350],[547,968],[420,983],[484,983],
[298,1050],[210,1105],[212,1115],[330,1088],[585,1137],[500,1205],[378,1301],[316,1325],[247,1373],[202,1373],[158,1332],[143,1283],[205,1340],[240,1365],[405,1235],[425,1230],[265,1300],[315,1285],[1030,965],[765,1195]].map(p => [...p, 1]).concat([[150,1190,0],[145,1215,0],[136,1245,0],[135,1262,0],[165,1165,0],[175,1205,0]]);
/* dense areas: x0, y0, x1, y1, step x, step y */
[[412,845,500,950,20,14],[500,900,560,925,24,14],[620,880,770,960,30,24],[890,870,1035,960,30,22],[660,950,1035,1010,30,17],[665,1010,740,1035,26,14],[760,1010,1000,1090,30,14],[800,1090,1000,1150,30,12],[815,1150,965,1230,28,11],[965,1150,1000,1200,17,16],[780,1200,970,1270,27,14],[660,1275,900,1300,26,12],[900,1260,950,1300,22,14],
 [165,1150,250,1180,26,14],[260,1120,340,1180,26,15],[340,1095,540,1180,26,14],[150,1185,420,1240,28,15],[150,1240,380,1280,28,16],[1220,955,1350,1050,28,17],[1300,925,1380,970,26,16],[600,980,640,1030,18,16],[520,1180,540,1190,20,12]].forEach(([x0, y0, x1, y1, dx, dy]) => {
  for (let y = y0; y <= y1; y += dy) for (let x = x0; x <= x1; x += dx * 2) PINS.push([x + rnd() * dx * 1.6, y + (rnd() - .5) * dy * 1.3, 0]);
});
PINS.sort((a, b) => a[1] - b[1]);

const layers = () => {
  const pt = (t, x, y) => [x * TILE[t][0] + TILE[t][2], y * TILE[t][1] + TILE[t][3]];
  const tiles = fn => ['A', 'B', 'C', 'D'].map(t => { const m = TILE[t]; return `<g transform="matrix(${m[0]} 0 0 ${m[1]} ${m[2]} ${m[3]})">${fn(t)}</g>`; }).join('');
  const fill = (src, c) => tiles(t => src[t] ? `<path d="${src[t]}" fill="${c}"/>` : '');
  const line = (src, c, w, x = '') => tiles(t => src[t] ? `<path d="${src[t].join('')}" fill="none" stroke="${c}" stroke-width="${w}" vector-effect="non-scaling-stroke" stroke-linejoin="round" stroke-linecap="${x ? 'butt' : 'round'}" ${x}/>` : '');
  const land = fill(LAND, '#f0efea') + fill(URBAN, '#e8e8e8') + fill(ISLES, '#f0efea') + tiles(t => SMALL[t] ? `<path d="${blobs(SMALL[t])}" fill="#f0efea"/>` : '');
  const greens = fill(GREEN, '#d4ecd1')
    + tiles(t => t === 'A' ? `<path d="${scatter(34, 40, 600, 560, 860, 5, 18)}${scatter(26, 580, 100, 1060, 500, 5, 18)}" fill="#f0efea"/><path d="${scatter(34, 30, 900, 900, 1500, 5, 26)}${scatter(24, 900, 30, 1550, 500, 6, 26)}" fill="#d4ecd1"/>` : t === 'B' ? `<path d="${scatter(60, 20, 20, 1540, 640, 6, 24)}${scatter(22, 560, 640, 1340, 880, 6, 20)}" fill="#d4ecd1"/><path d="${scatter(16, 760, 150, 1100, 800, 5, 16)}" fill="#f0efea"/>` : '')
    + fill(DARK, '#c9e6c5');
  const lakes = fill(LAKE, '#b3dafb') + tiles(t => t === 'A' ? `<path d="${scatter(34, 30, 300, 560, 740, 3, 13)}${scatter(12, 580, 260, 860, 560, 3, 10)}${scatter(10, 260, 920, 460, 1180, 3, 8)}" fill="#b3dafb"/>` : t === 'B' ? `<path d="${scatter(12, 500, 100, 1500, 820, 3, 7)}" fill="#b3dafb"/>` : t === 'C' ? `<path d="${scatter(20, 380, 590, 500, 740, 4, 12)}" fill="#f0efea"/>` : '');
  const labels = LABELS.map(([t, x, y, w, s, wt, c, txt]) => { const [px, py] = pt(t, x, y); return `<text x="${px.toFixed(1)}" y="${py.toFixed(1)}" textLength="${(w * SX).toFixed(1)}" font-size="${s}" font-weight="${wt}" fill="${c}" stroke="#fff" stroke-width="4.500" stroke-opacity=".85" stroke-linejoin="round" paint-order="stroke">${txt}</text>`; }).join('');
  const shields = SHIELDS.map(([t, x0, y0, x1, y1, k, txt]) => {
    const [a, b] = pt(t, x0, y0), [c, d] = pt(t, x1, y1), f = {w: '#fff', g: '#7a9d50', y: '#fbdb5c'}[k], s = {w: '#666', g: '#7a9d50', y: '#d6b042'}[k];
    return `<rect x="${a + 1}" y="${b + 1}" width="${c - a - 2}" height="${d - b - 2}" fill="${f}" stroke="${s}" stroke-width="2"/><text x="${(a + c) / 2}" y="${(b + d) / 2 + 7}" text-anchor="middle" font-size="19.500" font-weight="${k === 'g' ? 700 : 400}" fill="${k === 'g' ? '#fff' : '#222'}">${txt}</text>`; }).join('');
  const pins = PINS.map(([x, y, dot]) => { const [px, py] = pt('E', x, y); return `<g transform="translate(${px.toFixed(1)} ${py.toFixed(1)})"><path d="M0 56.500C-2 56.500-2 54-2.500 50C-5 30-25 20-25 0A25 25 0 0 1 25 0C25 20 5 30 2.500 50C2 54 2 56.500 0 56.500Z" fill="#db4f40" stroke="#fff" stroke-width="1.600"/>${dot ? '<circle r="9" fill="#7a1d17"/>' : ''}</g>`; }).join('');
  const logo = '<text x="12" y="1186" textLength="125" lengthAdjust="spacingAndGlyphs" font-family="Lato" font-weight="700" font-size="43" stroke="#fff" stroke-opacity=".6" stroke-width="5" paint-order="stroke"><tspan fill="#4f87ed">G</tspan><tspan fill="#d95040">o</tspan><tspan fill="#f2bd42">o</tspan><tspan fill="#4f87ed">g</tspan><tspan fill="#58a55d">l</tspan><tspan fill="#d95040">e</tspan></text>';
  return '<rect width="1280" height="1200" fill="#b3dafb"/>' + land + greens + lakes
    + line(ROADW, '#fff', 2.4) + line(ROADY, '#f2cf7c', 6.5) + line(ROADY, '#fde8a4', 3.8)
    + line(FERRY, '#9bbdf0', 2, 'stroke-dasharray="11 5"') + shields + labels + pins + logo;
};

define('map-view', `
<style>
:host{display:block;position:relative;width:1280px;height:1200px;overflow:hidden;font-family:Roboto,sans-serif}
svg.canvas{display:block}
.ctl{position:absolute;background:#fff;border-radius:4px;box-shadow:0 2px 7px rgba(0,0,0,.28);display:flex;align-items:center;justify-content:center}
.type{left:20px;top:20px;width:338px;height:80px;font-size:36px;line-height:80px;color:#565656;justify-content:flex-start}
.type div{width:140px;text-align:center;box-sizing:border-box}
.type div+div{width:198px;box-shadow:-2px 0 3px rgba(0,0,0,.09)}
.type b{font-weight:500;color:#000}
.full{right:20px;top:20px;width:80px;height:80px}
.peg{right:20px;top:846px;width:80px;height:80px}
.zoom{right:20px;top:990px;width:80px;height:162px;flex-direction:column}
.zoom div{height:80px;display:flex;align-items:center}
.zoom i{width:60px;height:2px;background:#e6e6e6}
.legal{position:absolute;right:0;bottom:0;height:28px;display:flex;gap:2px;font-size:20px;line-height:27px;color:#444}
.legal div{background:rgba(245,245,245,.72);text-align:center;white-space:nowrap}
</style>
<svg class="canvas" width="1280" height="1200" viewBox="0 0 1280 1200"></svg>
<div class="ctl type"><div><b><fit-text w="71">Map</fit-text></b></div><div><fit-text w="129">Satellite</fit-text></div></div>
<div class="ctl full"><svg width="36" height="36" viewBox="0 0 36 36" fill="none" stroke="#666" stroke-width="5"><path d="M2.500 12V2.500H12M24 2.500H33.500V12M33.500 24V33.500H24M12 33.500H2.500V24"/></svg></div>
<div class="ctl peg"><svg width="36" height="62" viewBox="0 0 36 62"><path d="M11 21H25Q28 21 29 24L34 42Q34.500 44 32 44L29.500 43L26.500 33V60H19L18 44L17 60H9.500V33L6.500 43L4 44Q1.500 44 2 42L7 24Q8 21 11 21Z" fill="#f5bd4c" stroke="#6f7071" stroke-width="1.800"/><path d="M10 20.500H26L18 32.500Z" fill="#d9843f"/><circle cx="18" cy="11.500" r="10" fill="#f5bd4c" stroke="#6f7071" stroke-width="1.800"/></svg></div>
<div class="ctl zoom"><div><svg width="36" height="36" viewBox="0 0 36 36" fill="#666"><path d="M14 0h8v14h14v8H22v14h-8V22H0v-8h14z"/></svg></div><i></i><div><svg width="36" height="36" viewBox="0 0 36 36" fill="#666"><path d="M0 14h36v8H0z"/></svg></div></div>
<div class="legal"><div style="width:240px"><fit-text w="218">Map data ©2020 Google</fit-text></div><div style="width:141px"><fit-text w="118">Terms of Use</fit-text></div><div style="width:188px"><fit-text w="167">Report a map error</fit-text></div></div>`,
root => { root.querySelector('svg.canvas').innerHTML = layers(); });

/* ---------- page ---------- */
define('city-app', `
<style>
:host{display:flex;flex-direction:column;width:3354px;height:1952px;background:#fff}
h1{margin:42px 3px 38px 0;font-size:77.500px;line-height:96px;font-weight:500;text-align:center}
main{display:flex;align-items:flex-start;padding-left:88px;flex:1}
map-view{margin:0 116px 0 60px}
footer{height:20px;background:linear-gradient(#fff,#ececec)}
</style>
<tab-strip></tab-strip><tool-bar></tool-bar>
<h1><fit-text w="350">City Bikes</fit-text></h1>
<main><station-form></station-form><map-view></map-view><weather-card></weather-card></main>
<footer></footer>`);

/* Tracks its text so the run takes the width given in "w". */
customElements.define('fit-text', class extends HTMLElement {
  constructor() {
    super();
    this.attachShadow({mode: 'open'}).innerHTML = '<style>:host{display:inline-block;white-space:nowrap}</style><slot></slot>';
  }
  connectedCallback() {
    const w = +this.getAttribute('w'), n = this.textContent.length;
    this.style.letterSpacing = ((w - this.getBoundingClientRect().width) / n).toFixed(3) + 'px';
  }
});
</script>
</body>
</html>
